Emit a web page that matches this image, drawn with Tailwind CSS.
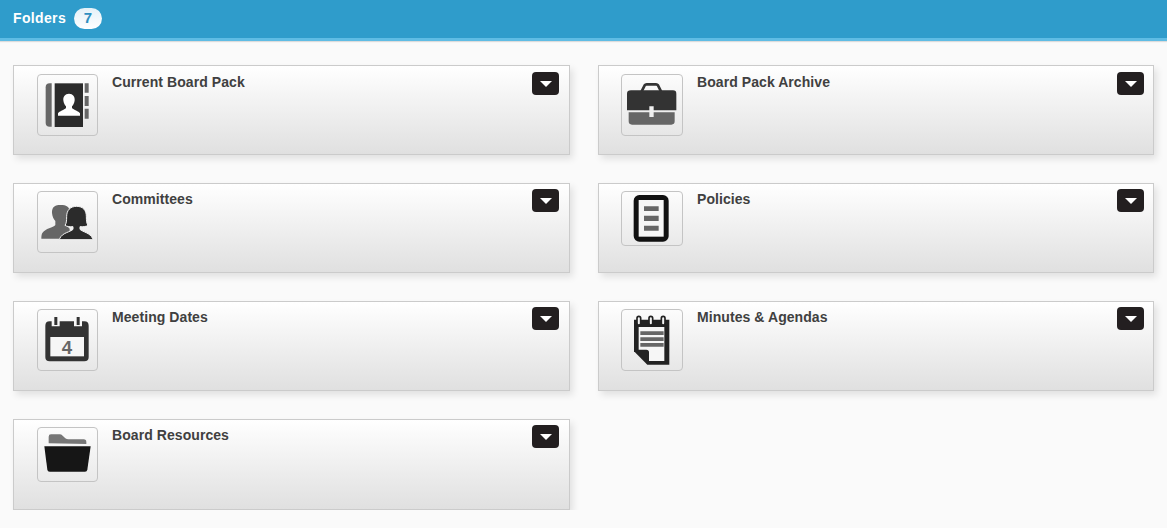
<!DOCTYPE html>
<html lang="en">
<head>
  <meta charset="UTF-8"/>
  <meta name="viewport" content="width=device-width, initial-scale=1.0"/>
  <title>Folders</title>
  <script src="https://cdn.jsdelivr.net/npm/@tailwindcss/browser@4"></script>
</head>
<body class="bg-[#fafafa] font-['Liberation_Sans',Arial,sans-serif] text-[#404040]">

  <!-- Header -->
  <div class="h-[41px] bg-[#2f9ccb] border-b-[3px] border-[#5fbce4] shadow-[0_1px_1px_#dcdcdc] flex items-center pl-[13px] gap-2 pb-px">
    <h1 class="text-[14px] font-bold text-white tracking-[0.35px]">Folders</h1>
    <span class="w-[28px] h-[21px] rounded-full bg-gradient-to-b from-[#e4f1f8] to-white text-[#2f8fc0] text-[15px] font-bold flex items-center justify-center">7</span>
  </div>

  <!-- Folder cards -->
  <div class="grid grid-cols-[557px_556px] gap-x-[28px] gap-y-[28px] px-[13px] pt-[24px] items-start">

    <div class="h-[90px] relative border border-[#cbcbcb] bg-gradient-to-b from-white to-[#e0e0e0] shadow-[3px_4px_7px_rgba(0,0,0,0.1)] flex items-start pt-[8px] pl-[23px]">
      <div class="w-[61px] h-[62px] shrink-0 rounded-[4px] border border-[#c4c4c4]">
        <svg class="-m-px block w-[61px] h-[62px]" viewBox="22 18 183 186">
          <path fill="#666" d="M60 46h6v130h-6q-12 0-12-12V58q0-12 12-12z"/>
          <rect x="75" y="46" width="85" height="131" fill="#2b2b2b"/>
          <path fill="#666" d="M165 46h12v28h-12zM165 84h12v30h-12zM165 122h12v30h-12z"/>
          <path fill="#fff" d="M118 77c-12 0-18 9-17 20 1 8 4 14 8 18v5c-5 6-20 9-24 16v7h66v-7c-4-7-19-10-24-16v-5c4-4 7-10 8-18 1-11-5-20-17-20z"/>
        </svg>
      </div>
      <h2 class="ml-[14px] -mt-[1px] text-[14px] leading-[18px] font-bold tracking-[0.07px]">Current Board Pack</h2>
      <button class="absolute top-[6px] right-[10px] w-[27px] h-[23px] rounded-[4px] bg-[#231f20] flex items-center justify-center">
        <span class="w-0 h-0 border-x-[6px] border-x-transparent border-t-[6px] border-t-white"></span>
      </button>
    </div>

    <div class="h-[90px] relative border border-[#cbcbcb] bg-gradient-to-b from-white to-[#e0e0e0] shadow-[3px_4px_7px_rgba(0,0,0,0.1)] flex items-start pt-[8px] pl-[22px]">
      <div class="w-[62px] h-[62px] shrink-0 rounded-[4px] border border-[#c4c4c4]">
        <svg class="-m-px block w-[62px] h-[62px]" viewBox="22 18 186 186">
          <path fill="none" stroke="#333" stroke-width="8" d="M84 70l9-18q2-3 6-3h28q4 0 6 3l9 18"/>
          <path fill="#333" d="M52 67h126q10 0 10 10v50H120v-12h-13v12H40V77q0-10 12-10z"/>
          <path fill="#666" d="M45 133h62v14h13v-14h63v27q0 10-10 10H55q-10 0-10-10z"/>
        </svg>
      </div>
      <h2 class="ml-[14px] -mt-[1px] text-[14px] leading-[18px] font-bold tracking-[0.07px]">Board Pack Archive</h2>
      <button class="absolute top-[6px] right-[9px] w-[27px] h-[23px] rounded-[4px] bg-[#231f20] flex items-center justify-center">
        <span class="w-0 h-0 border-x-[6px] border-x-transparent border-t-[6px] border-t-white"></span>
      </button>
    </div>

    <div class="h-[90px] relative border border-[#cbcbcb] bg-gradient-to-b from-white to-[#e0e0e0] shadow-[3px_4px_7px_rgba(0,0,0,0.1)] flex items-start pt-[7px] pl-[23px]">
      <div class="w-[61px] h-[62px] shrink-0 rounded-[4px] border border-[#c4c4c4]">
        <svg class="-m-px block w-[61px] h-[62px]" viewBox="22 18 183 186">
          <path fill="#666" d="M87 60c-14 0-21 11-20 24 1 11 5 19 10 24v12c-6 8-30 10-39 24-2 3-3 9-3 17h85v-30l-10-10v-13c5-5 9-13 10-24 1-13-6-24-21-24z"/>
          <path fill="#2b2b2b" stroke="#f2f2f2" stroke-width="3" d="M141 64c-19 0-30 12-30 30 0 13-1 22-5 27 6 4 15 5 24 4v8c-7 8-33 10-40 28v3h99v-3c-7-18-31-20-38-28v-8c9 1 18 0 24-4-4-5-5-14-5-27 0-18-10-30-29-30z"/>
        </svg>
      </div>
      <h2 class="ml-[14px] -mt-[1px] text-[14px] leading-[18px] font-bold tracking-[0.07px]">Committees</h2>
      <button class="absolute top-[5px] right-[10px] w-[27px] h-[23px] rounded-[4px] bg-[#231f20] flex items-center justify-center">
        <span class="w-0 h-0 border-x-[6px] border-x-transparent border-t-[6px] border-t-white"></span>
      </button>
    </div>

    <div class="h-[90px] relative border border-[#cbcbcb] bg-gradient-to-b from-white to-[#e0e0e0] shadow-[3px_4px_7px_rgba(0,0,0,0.1)] flex items-start pt-[7px] pl-[22px]">
      <div class="w-[62px] h-[55px] shrink-0 rounded-[4px] border border-[#c4c4c4]">
        <svg class="-m-px block w-[62px] h-[55px]" viewBox="22 18 186 165">
          <rect x="60" y="30" width="105" height="140" rx="17" fill="#111"/>
          <rect x="75" y="45" width="75" height="110" fill="#f6f6f6"/>
          <path fill="#666" d="M91 64h44v14H91zM91 92h44v16H91zM91 122h44v15H91z"/>
        </svg>
      </div>
      <h2 class="ml-[14px] -mt-[1px] text-[14px] leading-[18px] font-bold tracking-[0.07px]">Policies</h2>
      <button class="absolute top-[5px] right-[9px] w-[27px] h-[23px] rounded-[4px] bg-[#231f20] flex items-center justify-center">
        <span class="w-0 h-0 border-x-[6px] border-x-transparent border-t-[6px] border-t-white"></span>
      </button>
    </div>

    <div class="h-[90px] relative border border-[#cbcbcb] bg-gradient-to-b from-white to-[#e0e0e0] shadow-[3px_4px_7px_rgba(0,0,0,0.1)] flex items-start pt-[7px] pl-[23px]">
      <div class="w-[61px] h-[62px] shrink-0 rounded-[4px] border border-[#c4c4c4]">
        <svg class="-m-px block w-[61px] h-[62px]" viewBox="22 18 183 186">
          <path fill="#333" d="M60 55h6v15h24V55h43v15h24V55h7q13 0 13 13v95q0 12-13 12H60q-13 0-13-12V68q0-13 13-13z"/>
          <path fill="#333" d="M74 42h9v24h-9zM141 42h9v24h-9z"/>
          <rect x="62" y="102" width="101" height="58" fill="#f6f6f6"/>
          <text x="112" y="152" text-anchor="middle" font-family="Liberation Sans, sans-serif" font-weight="700" font-size="56" fill="#666">4</text>
        </svg>
      </div>
      <h2 class="ml-[14px] -mt-[1px] text-[14px] leading-[18px] font-bold tracking-[0.07px]">Meeting Dates</h2>
      <button class="absolute top-[5px] right-[10px] w-[27px] h-[23px] rounded-[4px] bg-[#231f20] flex items-center justify-center">
        <span class="w-0 h-0 border-x-[6px] border-x-transparent border-t-[6px] border-t-white"></span>
      </button>
    </div>

    <div class="h-[90px] relative border border-[#cbcbcb] bg-gradient-to-b from-white to-[#e0e0e0] shadow-[3px_4px_7px_rgba(0,0,0,0.1)] flex items-start pt-[7px] pl-[22px]">
      <div class="w-[62px] h-[62px] shrink-0 rounded-[4px] border border-[#c4c4c4]">
        <svg class="-m-px block w-[62px] h-[62px]" viewBox="22 18 186 186">
          <path fill="#222" d="M61 50h106v135h-66l-40-40z"/>
          <path fill="#f6f6f6" d="M75 72h77v102h-46v-26q0-8-8-8H75z"/>
          <path fill="#666" d="M80 85h70v11H80zM80 103h70v11H80zM80 120h70v11H80z"/>
          <g fill="#f4f4f4" stroke="#222" stroke-width="5">
            <rect x="70" y="40" width="11" height="26" rx="5.5"/>
            <rect x="106" y="40" width="11" height="26" rx="5.5"/>
            <rect x="143" y="40" width="11" height="26" rx="5.5"/>
          </g>
        </svg>
      </div>
      <h2 class="ml-[14px] -mt-[1px] text-[14px] leading-[18px] font-bold tracking-[0.07px]">Minutes &amp; Agendas</h2>
      <button class="absolute top-[5px] right-[9px] w-[27px] h-[23px] rounded-[4px] bg-[#231f20] flex items-center justify-center">
        <span class="w-0 h-0 border-x-[6px] border-x-transparent border-t-[6px] border-t-white"></span>
      </button>
    </div>

    <div class="h-[91px] relative border border-[#cbcbcb] bg-gradient-to-b from-white to-[#e0e0e0] shadow-[3px_4px_7px_rgba(0,0,0,0.1)] flex items-start pt-[7px] pl-[23px]">
      <div class="w-[61px] h-[55px] shrink-0 rounded-[4px] border border-[#c4c4c4]">
        <svg class="-m-px block w-[61px] h-[55px]" viewBox="22 21 183 165">
          <path fill="#777" d="M57 70V50q0-7 7-7h26q5 0 9 4l8 8q4 3 9 3h46q8 0 8 8v6z"/>
          <path fill="#161616" d="M44 79h139l-10 70q-1 6-7 6H60q-6 0-7-6z"/>
        </svg>
      </div>
      <h2 class="ml-[14px] -mt-[1px] text-[14px] leading-[18px] font-bold tracking-[0.07px]">Board Resources</h2>
      <button class="absolute top-[5px] right-[10px] w-[27px] h-[23px] rounded-[4px] bg-[#231f20] flex items-center justify-center">
        <span class="w-0 h-0 border-x-[6px] border-x-transparent border-t-[6px] border-t-white"></span>
      </button>
    </div>

  </div>
</body>
</html>
